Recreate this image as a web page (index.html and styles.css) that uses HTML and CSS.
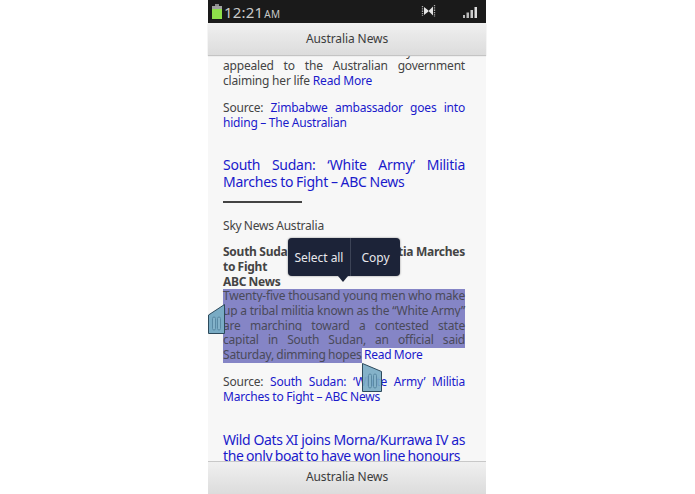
FILE: index.html
```html
<!DOCTYPE html>
<html lang="en">
<head>
<meta charset="utf-8">
<title>Australia News</title>
<link rel="stylesheet" href="styles.css">
</head>
<body>
<div class="phone">
  <div class="status">
    <svg class="battery" width="10" height="15" viewBox="0 0 10 15"><rect x="3" y="0" width="4" height="2" fill="#8a8a8a"/><rect x="0" y="2" width="10" height="3" fill="#a0a0a0"/><rect x="0" y="5" width="10" height="10" fill="#8fe04a"/></svg>
    <span class="time">12:21<small>AM</small></span>
    <span class="spacer"></span>
    <svg class="mute" width="15" height="14" viewBox="0 0 15 14"><path d="M3 3 7.500 6.500 7.500 7.500 3 11ZM8 6.500 12 2.500V11.500L8 7.500Z" fill="#e4e4e4"/><path d="M1.500 2V12M13.500 1V13" stroke="#aaa" stroke-width="1.300" stroke-dasharray="1.300 1" fill="none"/></svg>
    <svg class="signal" width="14" height="11" viewBox="0 0 14 11"><rect x="0" y="8" width="2" height="3" fill="#bbb"/><rect x="3.500" y="5.500" width="2.500" height="5.500" fill="#bbb"/><rect x="7.500" y="3" width="2.500" height="8" fill="#ccc"/><rect x="11.500" y="0" width="2.500" height="11" fill="#ddd"/></svg>
  </div>
  <header class="bar top-bar">Australia News</header>
  <main class="content">
    <p class="body-text first">The ambassador fears for safety and has appealed to the Australian government claiming her life <a href="#">Read More</a></p>
    <p class="body-text source">Source: <a href="#">Zimbabwe ambassador goes into hiding – The Australian</a></p>
    <h2 class="headline"><a href="#">South Sudan: ‘White Army’ Militia Marches to Fight – ABC News</a></h2>
    <hr class="rule">
    <p class="body-text outlet">Sky News Australia</p>
    <div class="article">
      <p class="body-text title"><strong>South Sudan: ‘White Army’ Militia Marches to Fight<br>ABC News</strong></p>
      <p class="body-text lead"><span class="selected">Twenty-five thousand young men who make up a tribal militia known as the “White Army” are marching toward a contested state capital in South Sudan, an official said Saturday, dimming hopes</span> <a href="#">Read More</a></p>
    </div>
    <p class="body-text source">Source: <a href="#">South Sudan: ‘White Army’ Militia Marches to Fight – ABC News</a></p>
    <h2 class="headline second"><a href="#">Wild Oats XI joins Morna/Kurrawa IV as the only boat to have won line honours</a></h2>
    <div class="popup">
      <span class="popup-item">Select all</span>
      <span class="popup-item">Copy</span>
      <i class="popup-arrow"></i>
    </div>
    <svg class="handle handle-left" width="17" height="31" viewBox="0 0 17 31"><path d="M.5 11 16.500.5V29.500H.5Z" fill="#79abc4" stroke="#2d4a5c"/><rect x="4.500" y="13" width="3" height="13" rx="1.500" fill="#84b2c9" stroke="#5a89a4"/><rect x="9.500" y="13" width="3" height="13" rx="1.500" fill="#84b2c9" stroke="#5a89a4"/></svg>
    <svg class="handle handle-right" width="21" height="30" viewBox="0 0 21 30"><path d="M.5.500 19.500 8.500V28.500H.5Z" fill="#79abc4" fill-opacity=".92" stroke="#2d4a5c"/><rect x="6.500" y="11" width="3" height="14" rx="1.500" fill="#84b2c9" stroke="#5a89a4"/><rect x="11.500" y="11" width="3" height="14" rx="1.500" fill="#84b2c9" stroke="#5a89a4"/></svg>
  </main>
  <footer class="bar bottom-bar">Australia News</footer>
</div>
</body>
</html>
```

FILE: styles.css
```css
* { box-sizing: border-box; }
html, body { margin: 0; height: 100%; background: #fff; }
body { font-family: "Noto Sans", "Open Sans", sans-serif; overflow: hidden; }
.phone {
  width: 278px;
  height: 494px;
  margin-left: 208px;
  display: flex;
  flex-direction: column;
  background: #f7f7f7;
}
.status {
  height: 23px;
  background: #1a1a1a;
  display: flex;
  align-items: center;
  padding: 0 9px 0 4px;
  color: #c9c9c9;
  flex: none;
}
.battery { margin-right: 2px; }
.time { font-size: 15px; letter-spacing: .2px; margin-top: 1px; }
.time small { font-size: 10px; margin-left: 1px; }
.spacer { flex: 1; }
.mute { margin-right: 27px; margin-top: -1px; }
.signal { margin-top: 1px; }
.bar {
  flex: none;
  display: flex;
  align-items: center;
  justify-content: center;
  font-size: 12px;
  letter-spacing: -.1px;
  color: #3c3c3c;
  background: linear-gradient(#f0f0f0, #dcdcdc);
  position: relative;
  z-index: 2;
}
.top-bar { height: 32px; padding-bottom: 2px; box-shadow: 0 1px 1px #c4c4c4; }
.bottom-bar { height: 33px; padding-bottom: 3px; border-top: 1px solid #c8c8c8; }
.content {
  flex: 1;
  min-height: 0;
  overflow: hidden;
  position: relative;
  padding: 0 21px 0 15px;
}
a { color: #1a1acb; text-decoration: none; }
p { margin: 0; }
.body-text {
  font-size: 12px;
  letter-spacing: -.2px;
  word-spacing: -.6px;
  line-height: 14.7px;
  color: #444;
  text-align: justify;
}
.first { margin-top: -10.500px; word-spacing: 0; }
.source { margin-top: 12.500px; word-spacing: -.2px; }
.headline {
  margin: 26.500px 0 0;
  font-size: 14px;
  letter-spacing: -.25px;
  word-spacing: -.5px;
  font-weight: 400;
  line-height: 16.500px;
  text-align: justify;
}
.rule {
  width: 79px;
  height: 2px;
  margin: 11px 0 0;
  border: 0;
  background: #444;
}
.outlet { margin-top: 15.500px; }
.article { margin-top: 12px; }
.title { position: relative; background: #f7f7f7; }
.title strong { font-weight: 700; letter-spacing: -.25px; word-spacing: -.5px; }
.selected { background: #8585c6; color: #4a4a5a; }
.second { margin-top: 27px; letter-spacing: -.4px; word-spacing: -.7px; }
.popup {
  position: absolute;
  left: 80px;
  top: 183px;
  width: 112px;
  height: 38px;
  background: #1c2338;
  border-radius: 4px;
  display: flex;
  align-items: center;
  box-shadow: 0 0 2px rgba(0, 0, 0, .5);
  color: #e8e8ec;
  font-size: 12px;
  letter-spacing: -.05px;
}
.popup-item { height: 100%; display: flex; align-items: center; justify-content: center; }
.popup-item:first-child { width: 63px; border-right: 1px solid #3c4356; }
.popup-item:nth-child(2) { flex: 1; }
.popup-arrow {
  position: absolute;
  left: 50px;
  top: 38px;
  border: 5px solid transparent;
  border-top: 6px solid #1c2338;
  border-bottom: 0;
}
.handle { position: absolute; }
.handle-left { left: 0; top: 249px; }
.handle-right { left: 153.500px; top: 307.500px; }
```
